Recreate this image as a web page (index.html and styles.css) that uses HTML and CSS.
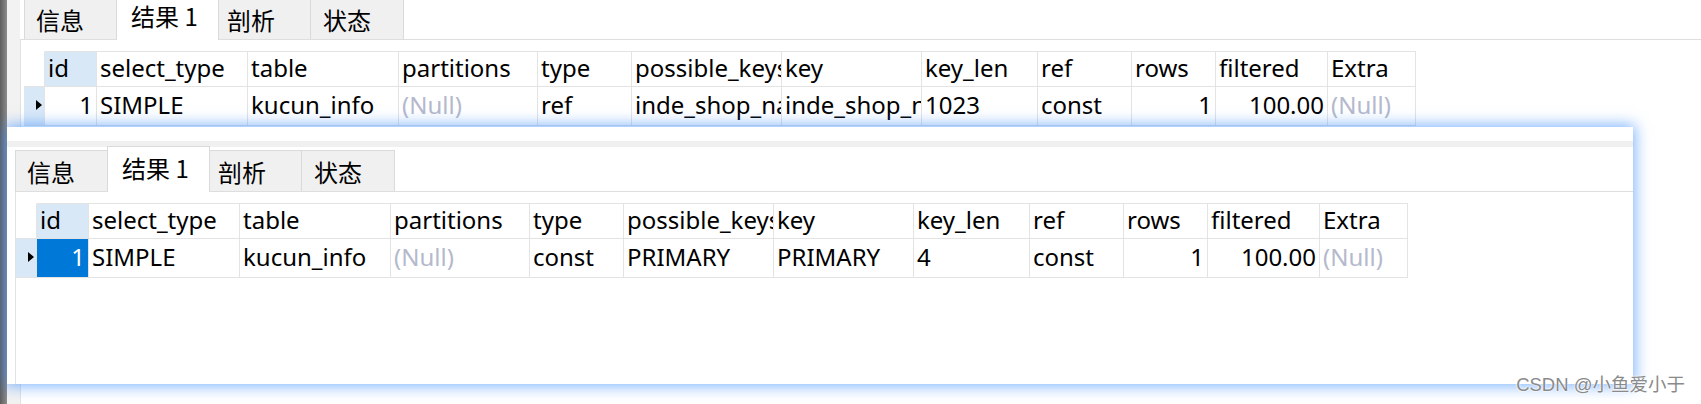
FILE: index.html
```html
<!DOCTYPE html>
<html lang="zh">
<head>
<meta charset="utf-8">
<title>Explain</title>
<link rel="stylesheet" href="styles.css">
</head>
<body>
<div class="desk">
  <div class="strip"></div>
  <div class="win back">
    <div class="gutter"></div>
    <div class="main">
      <div class="tabs">
        <div class="tab t1">信息</div>
        <div class="tab t2 active">结果 1</div>
        <div class="tab t3">剖析</div>
        <div class="tab t4">状态</div>
      </div>
      <div class="content">
        <div class="grid">
          <div class="h ind"></div>
          <div class="h idh">id</div>
          <div class="h">select_type</div>
          <div class="h">table</div>
          <div class="h">partitions</div>
          <div class="h">type</div>
          <div class="h">possible_keys</div>
          <div class="h">key</div>
          <div class="h">key_len</div>
          <div class="h">ref</div>
          <div class="h">rows</div>
          <div class="h">filtered</div>
          <div class="h">Extra</div>

          <div class="d ind"><span class="arrow"></span></div>
          <div class="d num">1</div>
          <div class="d">SIMPLE</div>
          <div class="d">kucun_info</div>
          <div class="d null">(Null)</div>
          <div class="d">ref</div>
          <div class="d">inde_shop_name</div>
          <div class="d">inde_shop_name</div>
          <div class="d">1023</div>
          <div class="d">const</div>
          <div class="d num">1</div>
          <div class="d num">100.00</div>
          <div class="d null">(Null)</div>
        </div>
      </div>
    </div>
  </div>

  <div class="win front">
    <div class="topgap"></div>
    <div class="band"></div>
    <div class="tabs ftabs">
      <div class="tab t1">信息</div>
      <div class="tab t2 active">结果 1</div>
      <div class="tab t3">剖析</div>
      <div class="tab t4">状态</div>
    </div>
    <div class="content fcontent">
      <div class="grid">
        <div class="h ind"></div>
        <div class="h idh">id</div>
        <div class="h">select_type</div>
        <div class="h">table</div>
        <div class="h">partitions</div>
        <div class="h">type</div>
        <div class="h">possible_keys</div>
        <div class="h">key</div>
        <div class="h">key_len</div>
        <div class="h">ref</div>
        <div class="h">rows</div>
        <div class="h">filtered</div>
        <div class="h">Extra</div>

        <div class="d ind"><span class="arrow"></span></div>
        <div class="d num sel">1</div>
        <div class="d">SIMPLE</div>
        <div class="d">kucun_info</div>
        <div class="d null">(Null)</div>
        <div class="d">const</div>
        <div class="d">PRIMARY</div>
        <div class="d">PRIMARY</div>
        <div class="d">4</div>
        <div class="d">const</div>
        <div class="d num">1</div>
        <div class="d num">100.00</div>
        <div class="d null">(Null)</div>
      </div>
    </div>
  </div>

  <div class="watermark">CSDN @小鱼爱小于</div>
</div>
</body>
</html>
```

FILE: styles.css
```css
* { box-sizing: border-box; }

html, body {
  margin: 0;
  padding: 0;
  background: #ffffff;
}

body {
  font-family: "Noto Sans", "Noto Sans CJK SC", sans-serif;
  font-size: 24px;
  color: #000;
}

.desk {
  position: relative;
  width: 1701px;
  height: 404px;
  display: flex;
  overflow: hidden;
  background: #fff;
}

.strip {
  width: 7px;
  flex: none;
  background: linear-gradient(to right, #5e5e5e, #8c8c8c);
}

.win.back {
  flex: 1;
  display: flex;
  background: #fff;
}

.gutter {
  width: 13px;
  flex: none;
  background: #f2f2f2;
}

.main {
  flex: 1;
  display: flex;
  flex-direction: column;
}

/* tab bar */
.tabs {
  display: flex;
  align-items: flex-end;
  height: 45px;
  margin-top: -5px;
  padding-left: 4px;
  border-bottom: 1px solid #dedede;
  background: #fff;
}

.tab {
  height: 41px;
  line-height: 41px;
  background: #f0f0f0;
  border: 1px solid #dadada;
  border-bottom: none;
  margin-right: -1px;
  font-family: "Noto Sans CJK SC", "Noto Sans", sans-serif;
  font-size: 24px;
  white-space: nowrap;
  color: #000;
}

.tab.t1 { width: 93px; padding-left: 11px; }
.tab.t2 { width: 103px; padding-left: 14px; }
.tab.t3 { width: 93px; padding-left: 8px; }
.tab.t4 { width: 94px; padding-left: 12px; }

.tab.active {
  height: 46px;
  margin-bottom: -1px;
  background: #fff;
  position: relative;
  z-index: 1;
}

.content {
  flex: 1;
  border-left: 1px solid #e2e2e2;
  padding: 11px 0 0 3px;
  background: #fff;
}

/* grid */
.grid {
  display: grid;
  grid-template-columns: 21px 52px 151px 151px 139px 94px 150px 140px 116px 94px 84px 112px 88px;
  width: max-content;
}

.h, .d {
  overflow: hidden;
  white-space: nowrap;
  padding: 0 3px;
  border-right: 1px solid #e3e3e3;
  border-bottom: 1px solid #e3e3e3;
}

.h {
  height: 36px;
  line-height: 32px;
  padding-bottom: 2px;
  border-top: 1px solid #e3e3e3;
}

.d {
  height: 39px;
  line-height: 35px;
  padding-bottom: 3px;
}

.h.ind {
  border-top-color: transparent;
  background: #fff;
}

.idh {
  background: #d9e8f7;
}

.d.ind {
  background: #d9e8f7;
  display: flex;
  align-items: center;
  padding-left: 12px;
}

.arrow {
  width: 0;
  height: 0;
  border-left: 6px solid #000;
  border-top: 5px solid transparent;
  border-bottom: 5px solid transparent;
}

.num {
  text-align: right;
  padding-right: 3px;
}

.null {
  color: #b5b9cc;
}

.sel {
  background: #0078d7;
  color: #fff;
}

/* front window */
.win.front {
  position: absolute;
  left: 7px;
  top: 127px;
  width: 1626px;
  height: 257px;
  background: #fff;
  box-shadow: 0 0 14px 2px rgba(40, 130, 255, 0.6);
  display: flex;
  flex-direction: column;
  z-index: 2;
}

.topgap {
  height: 14px;
  flex: none;
  background: #fff;
}

.band {
  height: 6px;
  flex: none;
  background: #f0f0f0;
}

.ftabs {
  margin-top: 0;
  margin-left: 8px;
  padding-left: 0;
  flex: none;
}

.fcontent {
  margin-left: 8px;
  padding-left: 0;
}

.watermark {
  position: absolute;
  right: 16px;
  bottom: 8px;
  z-index: 3;
  font-family: "Liberation Sans", "Noto Sans CJK SC", sans-serif;
  font-size: 18.5px;
  color: #8a8a8a;
  text-shadow: 0 0 2px #fff, 0 0 2px #fff;
  white-space: nowrap;
}
```
